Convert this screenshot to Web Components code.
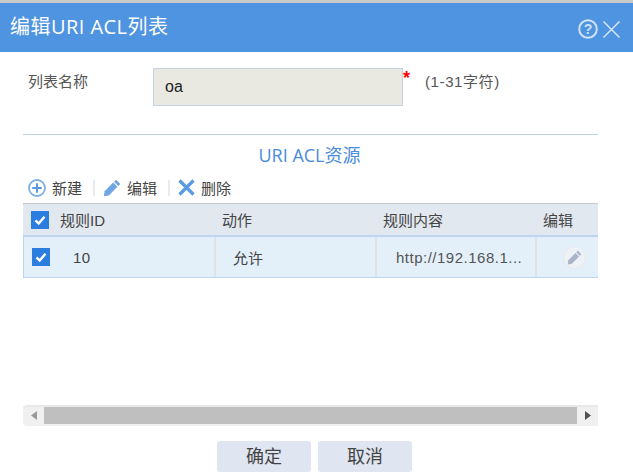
<!DOCTYPE html>
<html lang="zh"><head><meta charset="utf-8">
<style>
html,body{margin:0;padding:0;background:#fff;}
body{width:633px;height:475px;overflow:hidden;font-family:"Liberation Sans","Noto Sans CJK SC",sans-serif;color:#444;}
</style></head><body>
<acl-dialog heading="编辑URI ACL列表">
  <acl-form-row label="列表名称" value="oa" hint="(1-31字符)"></acl-form-row>
  <acl-section heading="URI ACL资源"></acl-section>
  <acl-toolbar></acl-toolbar>
  <acl-table></acl-table>
  <acl-scrollbar></acl-scrollbar>
  <acl-actions></acl-actions>
</acl-dialog>
<script>
const pencil=(c)=>`<svg width="100%" height="100%" viewBox="0 0 20 20" style="display:block"><path fill="${c}" d="M14.500 .8 19.200 5.500 17 7.700 12.300 3Z"/><path fill="${c}" d="M11.300 4 16 8.700 6.500 18.200 1 19.200 1.800 13.500Z"/></svg>`;
const check=`<svg width="18" height="18" viewBox="0 0 18 18" style="display:block;flex:none"><rect width="18" height="18" fill="#2b7de0"/><path d="M4.500 9.300 7.700 12.500 13.500 5.700" fill="none" stroke="#fff" stroke-width="2.400"/></svg>`;
function def(name,css,html){
  customElements.define(name,class extends HTMLElement{
    connectedCallback(){
      if(this.shadowRoot)return;
      const r=this.attachShadow({mode:'open'});
      const a=n=>this.getAttribute(n)||'';
      r.innerHTML=`<style>${css}</style>`+html(a);
    }
  });
}
def('acl-dialog',`
  :host{display:flex;flex-direction:column;width:633px;height:475px;box-sizing:border-box;border-top:3px solid #c9c9c9;background:#fff}
  header{flex:none;height:49px;background:#4f94e0;color:#fff;display:flex;align-items:center;padding:0 12px 0 10px}
  h1{margin:0;font:400 20px "Open Sans","Noto Sans CJK SC",sans-serif;letter-spacing:.45px;flex:1;position:relative;top:-2px}
  .ic{display:flex;gap:3px;align-items:center;position:relative;top:1px}
  main{flex:1;min-height:0;padding:16px 35px 0 23px;display:flex;flex-direction:column}
`,a=>`<header><h1>${a('heading')}</h1><div class="ic">
  <svg width="20" height="20" viewBox="0 0 20 20"><circle cx="10" cy="10" r="8.800" fill="none" stroke="#cfe2f7" stroke-width="2"/><text x="10" y="15" text-anchor="middle" font-family="Liberation Sans" font-weight="700" font-size="14" fill="#cfe2f7">?</text></svg>
  <svg width="20" height="20" viewBox="0 0 20 20"><path d="M2.500 2.500 18.500 18.500M18.500 2.500 2.500 18.500" stroke="#d6e6f8" stroke-width="1.500" fill="none"/></svg>
</div></header><main><slot></slot></main>`);
def('acl-form-row',`
  :host{display:flex;height:38px;font-size:15px;color:#555;flex:none}
  .l{width:130px;padding:4px 0 0 5px;box-sizing:border-box;line-height:20px}
  .v{width:250px;height:38px;box-sizing:border-box;background:#e9e8e1;border:1px solid #c5d2e6;color:#222;font-size:16px;line-height:36px;padding-left:11px}
  .s{color:#f00;font-size:18px;font-weight:700;line-height:20px;width:22px;padding-left:0;box-sizing:border-box;height:18px}
  .h{line-height:28px;letter-spacing:.6px}
`,a=>`<div class="l">${a('label')}</div><div class="v">${a('value')}</div><div class="s">*</div><div class="h">${a('hint')}</div>`);
def('acl-section',`
  :host{display:block;flex:none;margin-top:28px;border-top:1px solid #c0d3e6;height:40px;box-sizing:border-box;width:575px;text-align:center}
  div{font:400 18px "Open Sans","Noto Sans CJK SC",sans-serif;color:#4a8bdc;line-height:20px;padding-top:10px;position:relative;left:-1px}
`,a=>`<div>${a('heading')}</div>`);
def('acl-toolbar',`
  :host{display:flex;flex:none;height:29px;align-items:center;font-size:15px;color:#444;padding:0 0 2px 5px;box-sizing:border-box}
  .b{display:flex;align-items:center;gap:6px}
  .i{width:18px;height:18px;display:block;flex:none}
  .sep{width:2px;height:16px;background:#e9ecef;margin:0 8px 0 11px}
  .x{gap:5px}
`,()=>`<div class="b"><svg class="i" viewBox="0 0 18 18"><circle cx="9" cy="9" r="8" fill="none" stroke="#7fb0e6" stroke-width="1.800"/><path d="M9 4.200V13.800M4.200 9H13.800" stroke="#5b98e0" stroke-width="2"/></svg><span>新建</span></div><div class="sep"></div>
<div class="b"><span class="i">${pencil('#6fa5e3')}</span><span>编辑</span></div><div class="sep"></div>
<div class="b x"><svg class="i" viewBox="0 0 18 18"><path d="M1.500 1.500 15.500 15.500M15.500 1.500 1.500 15.500" stroke="#5a9ae2" stroke-width="3.200" fill="none"/></svg><span>删除</span></div>`);
def('acl-table',`
  :host{display:block;flex:none;width:575px;font-size:15px;color:#444}
  .r{display:grid;grid-template-columns:193px 161px 160px 61px}
  .head{height:34px;background:#e1e8f0;border-top:1px solid #c4c8cc;border-bottom:2px solid #c0d3ec;box-sizing:border-box;align-items:center}
  .head>div{display:flex;align-items:center;height:100%;padding-left:6px;box-sizing:border-box}
  .head>.c0{gap:11px;padding-left:8px}
  .body{height:41px;background:#e3f0fa;border-bottom:1px solid #bcd4ec;box-sizing:border-box;border-left:1px solid #bcd4ec;grid-template-columns:192px 161px 160px 61px}
  .body>div{display:flex;align-items:center;height:100%;border-right:2px solid #dfe3e8;box-sizing:border-box}
  .body>div:last-child{border-right:0}
  .dots{letter-spacing:.5px;padding-left:19px;white-space:nowrap;color:#555}
  .btn{width:23px;height:23px;border-radius:50%;background:#eef1f5;border:1px solid #e6e9ee;box-sizing:border-box;margin-left:26px;padding:3px}
`,()=>`<div class="r head"><div class="c0">${check}<span>规则ID</span></div><div>动作</div><div>规则内容</div><div>编辑</div></div>
<div class="r body"><div style="gap:23px;padding-left:8px">${check}<span style="letter-spacing:.5px">10</span></div><div style="padding-left:17px">允许</div><div class="dots">http://192.168.1...</div><div><div class="btn">${pencil('#a9b4ca')}</div></div></div>`);
def('acl-scrollbar',`
  :host{display:flex;flex:none;margin-top:127px;width:575px;height:21px;box-sizing:border-box;background:#f0f0f0;border-radius:4px 0 0 4px;border-top:2px solid #e8e8e8;padding-bottom:2px;align-items:stretch}
  .a{width:21px;display:flex;align-items:center;justify-content:center;flex:none}
  .t{flex:1;background:#bfbfbf}
`,()=>`<div class="a"><svg width="6" height="9" viewBox="0 0 6 9"><path d="M6 0V9L0 4.500Z" fill="#9a9a9a"/></svg></div><div class="t"></div><div class="a"><svg width="6" height="9" viewBox="0 0 6 9"><path d="M0 0V9L6 4.500Z" fill="#505050"/></svg></div>`);
def('acl-actions',`
  :host{display:flex;flex:none;justify-content:flex-start;gap:7px;margin-top:15px;padding-left:194px}
  button{all:unset;width:94px;height:31px;background:#dfe5f1;border-radius:3px;text-align:center;font-size:18px;line-height:33px;color:#444;box-sizing:border-box}
`,()=>`<button>确定</button><button>取消</button>`);
</script>
</body></html>
